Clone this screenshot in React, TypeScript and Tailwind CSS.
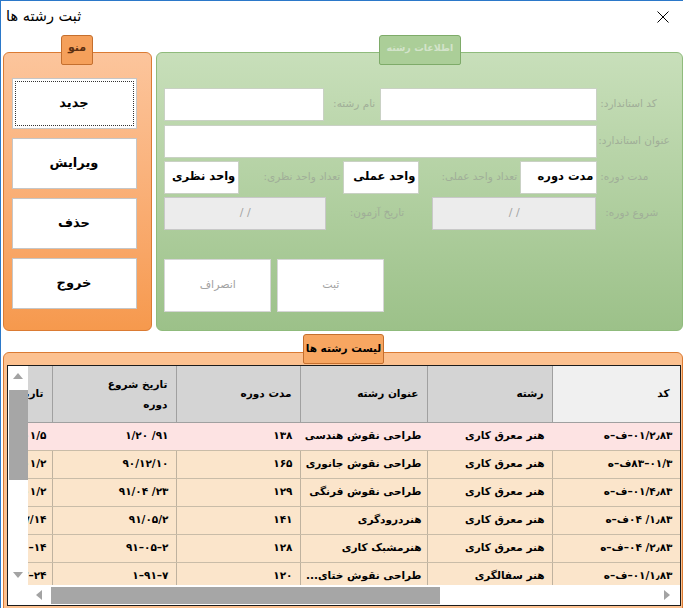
import React from "react";

const OVR = "[unicode-bidi:bidi-override] [direction:ltr]";

type Row = { tar: string; date: string; mod: string; onvan: string; reshte: string; kod: string };

const rows: Row[] = [
  { tar: "۹۱/۰۱/۵", date: "۱/۲۰ /۹۱", mod: "۱۳۸", onvan: "طراحی نقوش هندسی", reshte: "هنر معرق کاری", kod: "ه–ف–۰۱/۲٫۸۳" },
  { tar: "۹۱/۰۱/۲", date: "۹۰/۱۲/۱۰", mod: "۱۶۵", onvan: "طراحی نقوش جانوری", reshte: "هنر معرق کاری", kod: "ه–ف۸۳–۰۱/۳" },
  { tar: "۹۱/۰۱/۲", date: "۹۱/۰۴ /۲۳", mod: "۱۲۹", onvan: "طراحی نقوش فرنگی", reshte: "هنر معرق کاری", kod: "ه–ف–۰۱/۴٫۸۳" },
  { tar: "۹۱/۰۷/۱۴", date: "۹۱/۰۵/۲", mod: "۱۴۱", onvan: "هنردرودگری", reshte: "هنر معرق کاری", kod: "ه–ف۰۴ /۱٫۸۳" },
  { tar: "۹۱–۰۶–۱۴", date: "۹۱–۰۵–۲", mod: "۱۲۸", onvan: "هنرمشبک کاری", reshte: "هنر معرق کاری", kod: "ه–ف–۰۴ /۲٫۸۳" },
  { tar: "۹۱–۰۷–۲۴", date: "۱–۹۱–۷", mod: "۱۲۰", onvan: "طراحی نقوش ختای...", reshte: "هنر سفالگری", kod: "ه–ف–۰۱/۱٫۸۳" },
];

function MenuButton({ label, focused }: { label: string; focused?: boolean }) {
  return (
    <div className="relative h-[51px] w-[125px] bg-white border border-[#c6c6c6] flex items-center justify-center">
      {focused && <div className="absolute inset-[2px] border border-dotted border-[#333]" />}
      <span dir="rtl" className="text-[13px] font-bold text-black">{label}</span>
    </div>
  );
}

function Label({ text, cls }: { text: string; cls: string }) {
  return (
    <div dir="rtl" className={`shrink-0 whitespace-nowrap text-[10.5px] text-[#a0ae98] flex items-center ${cls}`}>
      {text}
    </div>
  );
}

function WhiteBox({ cls, text }: { cls: string; text?: string }) {
  return (
    <div dir="rtl" className={`shrink-0 h-full bg-white border border-[#c9d1c4] flex items-center pr-[3px] ${cls}`}>
      {text && <span className="text-[11.5px] font-bold text-black whitespace-nowrap">{text}</span>}
    </div>
  );
}

function GrayBox({ cls }: { cls: string }) {
  return (
    <div className={`shrink-0 h-full bg-[#ececec] border border-[#c8c8c8] flex items-center justify-center ${cls}`}>
      <span className="text-[11px] text-[#a3a3a3]">/ /</span>
    </div>
  );
}

function UpArrow() {
  return (
    <svg width="10" height="6" viewBox="0 0 10 6"><polygon points="0,6 5,0 10,6" fill="#a3a3a3" /></svg>
  );
}
function DownArrow() {
  return (
    <svg width="10" height="6" viewBox="0 0 10 6"><polygon points="0,0 10,0 5,6" fill="#a3a3a3" /></svg>
  );
}
function LeftArrow() {
  return (
    <svg width="6" height="10" viewBox="0 0 6 10"><polygon points="6,0 6,10 0,5" fill="#a3a3a3" /></svg>
  );
}
function RightArrow() {
  return (
    <svg width="6" height="10" viewBox="0 0 6 10"><polygon points="0,0 6,5 0,10" fill="#a3a3a3" /></svg>
  );
}

const colW = ["w-[24px]", "w-[124px]", "w-[124px]", "w-[127px]", "w-[125px]", "w-[128px]"];

export default function App() {
  const headers = ["تاریخ آزمون", "DATE", "مدت دوره", "عنوان رشته", "رشته", "کد"];
  return (
    <div className="w-[683px] h-[608px] overflow-hidden bg-white border-l border-t border-[#2b78c9] flex flex-col font-['DejaVu_Sans',sans-serif]">
      {/* Title bar */}
      <div className="h-[32px] shrink-0 flex items-center justify-between pl-[5px] pr-[14px]">
        <span dir="rtl" className="text-[14.5px] text-black">ثبت رشته ها</span>
        <svg width="12" height="12" viewBox="0 0 12 12">
          <line x1="0.5" y1="0.5" x2="11.5" y2="11.5" stroke="#000" strokeWidth="1" />
          <line x1="11.5" y1="0.5" x2="0.5" y2="11.5" stroke="#000" strokeWidth="1" />
        </svg>
      </div>

      {/* Top section */}
      <div className="mt-[19px] ml-[2px] flex gap-[4px] shrink-0">
        {/* Menu */}
        <div className="relative w-[149px] h-[279px] rounded-[6px] border-[1.5px] border-[#db7b33] bg-linear-to-b from-[#fcc59c] to-[#f6994d]">
          <div className="absolute left-[57px] top-[-18px] w-[32px] h-[30px] rounded-t-[3px] rounded-b-[2px] border border-[#c46f2e] bg-[#f5a05b] flex items-start justify-center pt-[4px]">
            <span dir="rtl" className="text-[11px] font-bold text-[#5c2f10] whitespace-nowrap">منو</span>
          </div>
          <div className="flex flex-col gap-[9px] pl-[7.5px] pt-[24.5px]">
            <MenuButton label="جدید" focused />
            <MenuButton label="ویرایش" />
            <MenuButton label="حذف" />
            <MenuButton label="خروج" />
          </div>
        </div>

        {/* Info panel */}
        <div className="relative w-[528px] h-[279px] rounded-[6px] border-[1.5px] border-[#8fbb7c] bg-linear-to-b from-[#c8dfba] to-[#9cc189]">
          <div className="absolute left-[222px] top-[-18px] w-[82px] h-[30px] rounded-t-[3px] rounded-b-[2px] border border-[#7eab69] bg-[#abce98] flex items-start justify-center pt-[5px]">
            <span dir="rtl" className="text-[9.5px] font-bold text-[#d3e3ca] whitespace-nowrap">اطلاعات رشته</span>
          </div>
          <div className="h-full w-full overflow-hidden rounded-[6px] flex flex-col pl-[7.5px] pt-[34.5px]">
            {/* Row 1 */}
            <div className="flex h-[33px]">
              <WhiteBox cls="w-[160px]" />
              <Label text="نام رشته:" cls="w-[56px] justify-start pr-[5px]" />
              <WhiteBox cls="w-[217px]" />
              <Label text="کد استاندارد:" cls="ml-[3px]" />
            </div>
            {/* Row 2 */}
            <div className="flex h-[33px] mt-[4px]">
              <WhiteBox cls="w-[433px]" />
              <Label text="عنوان استاندارد:" cls="ml-[1px]" />
            </div>
            {/* Row 3 */}
            <div className="flex h-[33px] mt-[3px]">
              <WhiteBox cls="w-[75px]" text="واحد نظری" />
              <Label text="تعداد واحد نظری:" cls="w-[104px] justify-start pr-[3px]" />
              <WhiteBox cls="w-[76px]" text="واحد عملی" />
              <Label text="تعداد واحد عملی:" cls="w-[101px] justify-start pr-[3px]" />
              <WhiteBox cls="w-[77px]" text="مدت دوره" />
              <Label text="مدت دوره:" cls="ml-[3px]" />
            </div>
            {/* Row 4 */}
            <div className="flex h-[33px] mt-[3px]">
              <GrayBox cls="w-[162px]" />
              <Label text="تاریخ آزمون:" cls="w-[106px] justify-start pr-[28px]" />
              <GrayBox cls="w-[164px]" />
              <Label text="شروع دوره:" cls="ml-[9px]" />
            </div>
            {/* Buttons */}
            <div className="flex gap-[6px] mt-[29px]">
              <div className="w-[107px] h-[53px] bg-white border border-[#d6d6d6] flex items-center justify-center">
                <span dir="rtl" className="text-[11px] text-[#a3a3a3]">انصراف</span>
              </div>
              <div className="w-[107px] h-[53px] bg-white border border-[#d6d6d6] flex items-center justify-center">
                <span dir="rtl" className="text-[11px] text-[#a3a3a3]">ثبت</span>
              </div>
            </div>
          </div>
        </div>
      </div>

      {/* Bottom section */}
      <div className="relative mt-[21px] ml-[2px] w-[680px] h-[262px] shrink-0 rounded-t-[6px] border-[1.5px] border-[#db7b33] bg-[#fcc190]">
        <div className="absolute left-[299px] top-[-19px] w-[81px] h-[30px] rounded-t-[3px] rounded-b-[2px] border border-[#c46f2e] bg-[#f7a661] flex items-center justify-center">
          <span dir="rtl" className="text-[10.5px] font-bold text-black whitespace-nowrap">لیست رشته ها</span>
        </div>
        <div className="mt-[11.5px] ml-[2.5px] w-[674px] h-[241px] border border-[#1c1c1c] bg-white flex flex-col">
          <div className="flex h-[219px]">
            {/* vertical scrollbar */}
            <div className="w-[20px] h-full flex flex-col items-center">
              <div className="h-[20px] flex items-center justify-center"><UpArrow /></div>
              <div className="mt-[4px] w-[19px] ml-[1px] h-[90px] bg-[#a6a6a6]" />
              <div className="flex-1" />
              <div className="h-[20px] flex items-center justify-center"><DownArrow /></div>
            </div>
            {/* table */}
            <div className="w-[652px] h-full overflow-hidden flex flex-col">
              <div className="flex h-[57px] shrink-0 border-b border-[#a0a0a0]">
                {headers.map((h, i) => (
                  <div
                    key={i}
                    dir="rtl"
                    className={`${colW[i]} shrink-0 h-full overflow-hidden whitespace-nowrap flex items-center text-[10.5px] font-bold text-black ${
                      i === 5 ? "bg-[#f0f0f0] pr-[10px]" : "bg-[#d4d4d4] pr-[8px]"
                    } ${i > 0 ? "border-l border-[#a0a0a0]" : ""}`}
                  >
                    {i === 1 ? (
                      <span className="leading-[20px]">تاریخ شروع<br />دوره</span>
                    ) : (
                      <span>{h}</span>
                    )}
                  </div>
                ))}
              </div>
              {rows.map((r, ri) => {
                const vals = [r.tar, r.date, r.mod, r.onvan, r.reshte, r.kod];
                const sel = ri === 0;
                return (
                  <div
                    key={ri}
                    className={`flex h-[28px] shrink-0 border-b ${sel ? "bg-[#fde3e3] border-[#c9bca8]" : "bg-[#fbe5cb] border-[#c9bca8]"}`}
                  >
                    {vals.map((v, i) => (
                      <div
                        key={i}
                        dir="rtl"
                        className={`${colW[i]} shrink-0 h-full overflow-hidden whitespace-nowrap flex items-center text-[10.5px] font-bold text-black ${
                          i === 0 ? "pr-[5px]" : i === 3 ? "pr-[5px]" : "pr-[7px]"
                        } ${i > 0 ? (sel ? "border-l border-[#fde3e3]" : "border-l border-[#bfb29f]") : ""}`}
                      >
                        {i === 0 || i === 1 || i === 2 || i === 5 ? (
                          <span className={OVR}>{v}</span>
                        ) : (
                          <span>{v}</span>
                        )}
                      </div>
                    ))}
                  </div>
                );
              })}
            </div>
          </div>
          {/* horizontal scrollbar */}
          <div className="flex h-[20px]">
            <div className="w-[20px] h-full" />
            <div className="w-[23px] h-full flex items-center justify-center"><LeftArrow /></div>
            <div className="w-[389px] mt-[2px] h-[17px] bg-[#a6a6a6]" />
            <div className="flex-1" />
            <div className="w-[26px] h-full flex items-center justify-center"><RightArrow /></div>
          </div>
        </div>
      </div>
    </div>
  );
}
